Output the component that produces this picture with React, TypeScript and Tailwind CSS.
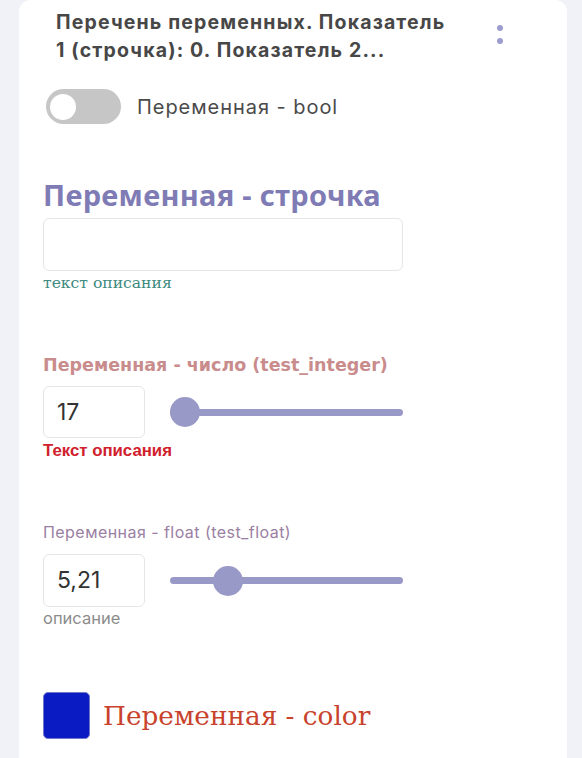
import React from "react";

function Slider({ left }: { left: number }) {
  return (
    <div className="relative h-[32px] w-[233px]">
      <div className="absolute left-0 right-0 top-[12.5px] h-[7px] rounded-full bg-[#9999c7]" />
      <div
        className="absolute top-[1px] h-[30px] w-[30px] rounded-full bg-[#9999c7]"
        style={{ left }}
      />
    </div>
  );
}

export default function App() {
  return (
    <div className="min-h-[758px] w-full bg-[#f1f2f7] pl-[19px] pr-[15px]">
      <div className="min-h-[758px] rounded-t-[12px] bg-white pl-[24px] pb-10">
        <div className="flex items-start pt-[8px]">
          <div
            className="ml-[13px] w-[420px] text-[19.5px] font-bold leading-[28px] tracking-[1.15px] text-[#474747]"
            style={{ fontFamily: "Inter, sans-serif" }}
          >
            Перечень переменных. Показатель
            <br />
            1 (строчка): 0. Показатель 2...
          </div>
          <div className="ml-[21px] mt-[17px] flex flex-col gap-[6.5px]">
            <div className="h-[6px] w-[6px] rounded-full bg-[#9c9cd0]" />
            <div className="h-[6px] w-[6px] rounded-full bg-[#9c9cd0]" />
          </div>
        </div>

        <div className="mt-[25px] ml-[3px] flex items-center">
          <div className="relative h-[35px] w-[75px] rounded-full bg-[#c6c6c6]">
            <div className="absolute left-[4px] top-[4.5px] h-[26px] w-[26px] rounded-full bg-white" />
          </div>
          <span
            className="ml-[16px] text-[20px] leading-[28px] tracking-[0.95px] text-[#4a4a4a]"
            style={{ fontFamily: "Inter, sans-serif" }}
          >
            Переменная - bool
          </span>
        </div>

        <div
          className="mt-[54px] h-[34px] text-[29px] font-bold leading-[34px] tracking-[0.3px] text-[#7f7bb4]"
          style={{ fontFamily: "'Noto Sans', sans-serif" }}
        >
          Переменная - строчка
        </div>
        <div className="mt-[6px] h-[53px] w-[360px] rounded-[6px] border border-[#e6e6e6]" />
        <div
          className="mt-[2px] h-[20px] text-[15.6px] leading-[20px] text-[#3d8a7f]"
          style={{ fontFamily: "'DejaVu Serif', serif" }}
        >
          текст описания
        </div>

        <div
          className="mt-[62px] h-[20px] text-[17.5px] font-bold leading-[20px] text-[#c98c8c]"
          style={{ fontFamily: "'DejaVu Sans', sans-serif" }}
        >
          Переменная - число (test_integer)
        </div>
        <div className="mt-[11px] flex h-[52px] items-center">
          <div
            className="flex h-[52px] w-[102px] items-center rounded-[6px] border border-[#e6e6e6] pl-[13px] text-[23px] text-[#333333]"
            style={{ fontFamily: "Inter, sans-serif" }}
          >
            17
          </div>
          <div className="ml-[25px]">
            <Slider left={0} />
          </div>
        </div>
        <div
          className="mt-[3px] h-[20px] text-[16.8px] font-bold leading-[20px] text-[#d0202b]"
          style={{ fontFamily: "'Liberation Sans', sans-serif" }}
        >
          Текст описания
        </div>

        <div
          className="mt-[61px] h-[20px] text-[16px] leading-[20px] tracking-[0.45px] text-[#9a80a3]"
          style={{ fontFamily: "Inter, sans-serif" }}
        >
          Переменная - float (test_float)
        </div>
        <div className="mt-[12px] flex h-[53px] items-center">
          <div
            className="flex h-[53px] w-[102px] items-center rounded-[6px] border border-[#e6e6e6] pl-[13px] text-[23px] text-[#333333]"
            style={{ fontFamily: "Inter, sans-serif" }}
          >
            5,21
          </div>
          <div className="ml-[25px]">
            <Slider left={43} />
          </div>
        </div>
        <div
          className="mt-[1px] h-[20px] text-[16.5px] leading-[20px] text-[#8c8c8c]"
          style={{ fontFamily: "Inter, sans-serif" }}
        >
          описание
        </div>

        <div className="mt-[64px] flex items-center">
          <div className="h-[47px] w-[47px] rounded-[5px] border border-[#6f78c9] bg-[#0b1bc3]" />
          <span
            className="ml-[13px] text-[26.3px] leading-[34px] text-[#c8422c]"
            style={{ fontFamily: "'DejaVu Serif', serif" }}
          >
            Переменная - color
          </span>
        </div>
      </div>
    </div>
  );
}
